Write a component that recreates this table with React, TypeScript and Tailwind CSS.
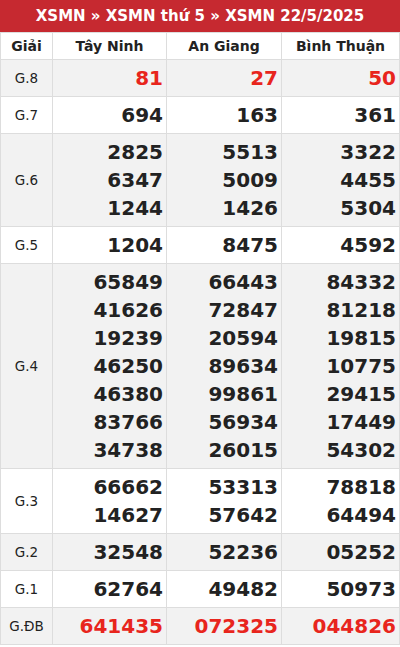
import React from "react";

type Row = { label: string; values: string[][]; red?: boolean };

const rows: Row[] = [
  { label: "G.8", values: [["81"], ["27"], ["50"]], red: true },
  { label: "G.7", values: [["694"], ["163"], ["361"]] },
  { label: "G.6", values: [["2825", "6347", "1244"], ["5513", "5009", "1426"], ["3322", "4455", "5304"]] },
  { label: "G.5", values: [["1204"], ["8475"], ["4592"]] },
  {
    label: "G.4",
    values: [
      ["65849", "41626", "19239", "46250", "46380", "83766", "34738"],
      ["66443", "72847", "20594", "89634", "99861", "56934", "26015"],
      ["84332", "81218", "19815", "10775", "29415", "17449", "54302"],
    ],
  },
  { label: "G.3", values: [["66662", "14627"], ["53313", "57642"], ["78818", "64494"]] },
  { label: "G.2", values: [["32548"], ["52236"], ["05252"]] },
  { label: "G.1", values: [["62764"], ["49482"], ["50973"]] },
  { label: "G.ĐB", values: [["641435"], ["072325"], ["044826"]], red: true },
];

export default function App() {
  return (
    <div className="w-[400px] bg-white" style={{ fontFamily: '"DejaVu Sans", sans-serif' }}>
      <div className="h-[32px] bg-[#c62930] text-white font-bold text-[15px] flex items-center justify-center">
        XSMN » XSMN thứ 5 » XSMN 22/5/2025
      </div>
      <table className="w-full table-fixed border-collapse border border-[#dcdde3]">
        <colgroup>
          <col className="w-[52px]" />
          <col className="w-[114px]" />
          <col className="w-[115px]" />
          <col />
        </colgroup>
        <thead>
          <tr className="bg-white">
            {["Giải", "Tây Ninh", "An Giang", "Bình Thuận"].map((h) => (
              <th
                key={h}
                className="border border-[#dddddd] text-[14px] font-bold text-[#222] leading-5 pt-[3px] pb-[3px] text-center"
              >
                {h}
              </th>
            ))}
          </tr>
        </thead>
        <tbody>
          {rows.map((r, i) => (
            <tr key={r.label} className={i % 2 === 0 ? "bg-[#f2f2f2]" : "bg-white"}>
              <td className="border border-[#dddddd] text-center text-[13.5px] text-[#222] py-[4px]">{r.label}</td>
              {r.values.map((col, j) => (
                <td
                  key={j}
                  className={
                    "border border-[#dddddd] text-right pr-[3px] py-[4px] text-[20px] font-bold leading-[28px] " +
                    (r.red ? "text-[#e8251d]" : "text-[#222]")
                  }
                >
                  {col.map((v) => (
                    <div key={v}>{v}</div>
                  ))}
                </td>
              ))}
            </tr>
          ))}
        </tbody>
      </table>
    </div>
  );
}
